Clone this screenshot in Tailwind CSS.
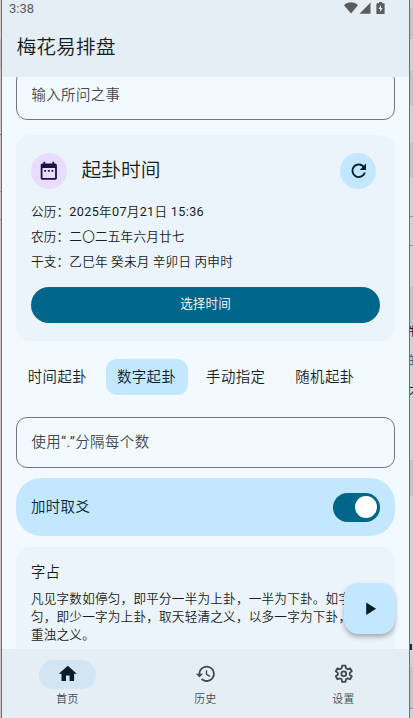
<!DOCTYPE html>
<html lang="zh-CN">
<head>
    <meta charset="UTF-8">
    <meta name="viewport" content="width=device-width, initial-scale=1.0">
    <title>梅花易排盘</title>
    <script src="https://cdn.jsdelivr.net/npm/@tailwindcss/browser@4"></script>
</head>
<body class="h-screen overflow-hidden flex bg-[#c9c8ca] text-[#171c20] font-[350] font-['Roboto','Noto_Sans_CJK_SC',sans-serif]">

<!-- Left window edge -->
<div class="w-0.5 shrink-0 bg-[#cdc5c7] border-r border-[#6d7173] flex flex-col">
    <div class="h-[39px] bg-[#d6d0d1]"></div>
    <div class="h-[31px] bg-[#c4bcbe]"></div>
    <div class="h-[65px] bg-[#d0c9cb] border-b border-[#777]"></div>
    <div class="h-[57px] bg-[#cdc5c7] border-b border-[#999]"></div>
    <div class="h-[28px] bg-[#cdc5c7] border-b border-[#999]"></div>
</div>

<div id="app" class="relative w-[407px] shrink-0 h-full flex flex-col bg-[#f3faff]">
    <!-- Top bar -->
    <header class="h-[77px] shrink-0 bg-[#e6eef5]">
        <div class="h-[17px] flex items-center pl-[7px] pr-[24px]">
            <span class="text-[13px] leading-[17px] font-normal text-[#5a5d60]">3:38</span>
            <svg class="ml-auto -mt-[2px] w-[14px] h-[12px] fill-[#5a5d60]" viewBox="0 0 14 12">
                <path d="M0 3.2C4-.6 10-.6 14 3.2L7 11.6z"/>
            </svg>
            <svg class="ml-[1px] -mt-px w-[12px] h-[12px] fill-[#5a5d60]" viewBox="0 0 12 12">
                <path d="M11.5.5v11.3H.5z"/>
            </svg>
            <svg class="ml-[5px] -mt-[2px] w-[9px] h-[12px] fill-[#5a5d60]" viewBox="0 0 9 12">
                <path d="M3 0h3v1.2h2a.6.6 0 0 1 .6.6v9.6a.6.6 0 0 1-.6.6H1a.6.6 0 0 1-.6-.6V1.8A.6.6 0 0 1 1 1.2h2z"/>
                <path class="fill-[#e6eef5]" d="M5 3 2.5 7h1.6v3L6.6 6H5z"/>
            </svg>
        </div>
        <h1 class="pl-[14.5px] pt-[18px] text-[19.8px] leading-[26px]">梅花易排盘</h1>
    </header>

    <!-- Content -->
    <main class="flex-1 min-h-0 overflow-hidden px-[14.4px]">
        <div class="-mt-2 h-[51px] flex items-center rounded-[11px] border border-[#70787f] pl-3.5 pt-0.5 text-[14.4px] tracking-[0.45px] text-[#40484d]">
            输入所问之事
        </div>

        <!-- Time card -->
        <section class="mt-[15px] h-[206px] rounded-[14px] bg-[#ecf4fb] px-[14.5px] pt-[18px]">
            <div class="flex items-center">
                <div class="size-9 rounded-full bg-[#e8ddff] flex items-center justify-center">
                    <svg class="size-[21.6px] fill-[#1f1048]" viewBox="0 0 24 24">
                        <path d="M9 11H7v2h2zm4 0h-2v2h2zm4 0h-2v2h2zm2-7h-1V2h-2v2H8V2H6v2H5c-1.11 0-1.99.9-1.99 2L3 20c0 1.1.89 2 2 2h14c1.1 0 2-.9 2-2V6c0-1.1-.9-2-2-2m0 16H5V9h14z"/>
                    </svg>
                </div>
                <h2 class="ml-[14.5px] text-[19.8px] leading-9">起卦时间</h2>
                <button class="ml-auto mr-[3.8px] size-9 rounded-full bg-[#c3e7ff] flex items-center justify-center">
                    <svg class="size-[21.6px] fill-[#001e2c]" viewBox="0 0 24 24">
                        <path d="M17.65 6.35C16.2 4.9 14.21 4 12 4c-4.42 0-7.99 3.58-7.99 8s3.57 8 7.99 8c3.73 0 6.84-2.55 7.73-6h-2.08c-.82 2.33-3.04 4-5.65 4-3.31 0-6-2.69-6-6s2.69-6 6-6c1.66 0 3.14.69 4.22 1.78L13 11h7V4z"/>
                    </svg>
                </button>
            </div>
            <div class="mt-[10px] text-[12.6px] leading-[25.2px] tracking-[0.22px]">
                <p>公历：<span class="font-normal tracking-[0.36px]">2025</span>年<span class="font-normal tracking-[0.36px]">07</span>月<span class="font-normal tracking-[0.36px]">21</span>日<span class="font-normal tracking-[0.36px]"> 15:36</span></p>
                <p>农历：二〇二五年六月廿七</p>
                <p>干支：乙巳年 癸未月 辛卯日 丙申时</p>
            </div>
            <button class="mt-3 w-full h-9 rounded-full bg-[#00668b] text-white text-[12.6px] tracking-[0.09px]">选择时间</button>
        </section>

        <!-- Method tabs -->
        <div class="mt-[18px] flex gap-[7.2px] text-[14.4px] tracking-[0.45px]">
            <div class="w-[82px] h-9 pt-0.5 flex items-center justify-center">时间起卦</div>
            <div class="w-[82px] h-9 pt-0.5 flex items-center justify-center rounded-[11px] bg-[#c3e7ff] text-[#001e2c]">数字起卦</div>
            <div class="w-[82px] h-9 pt-0.5 flex items-center justify-center">手动指定</div>
            <div class="w-[82px] h-9 pt-0.5 flex items-center justify-center">随机起卦</div>
        </div>

        <div class="mt-[22px] h-[51px] flex items-center rounded-[11px] border border-[#70787f] pl-3.5 text-[14.4px] tracking-[0.45px] text-[#40484d]">
            使用<span class="font-normal">“.”</span>分隔每个数
        </div>

        <!-- Switch row -->
        <div class="mt-[10px] h-[58px] flex items-center justify-between rounded-[25px] bg-[#c3e7ff] px-[14.5px] text-[#001e2c]">
            <span class="pt-0.5 text-[14.4px] tracking-[0.45px]">加时取爻</span>
            <div class="w-[47px] h-[29px] rounded-full bg-[#00668b] flex items-center justify-end pr-[3.6px]">
                <div class="size-[22px] rounded-full bg-white"></div>
            </div>
        </div>

        <section class="mt-[11px] h-[130px] rounded-[14px] bg-[#ecf4fb] px-[14.5px] pt-[15px]">
            <h3 class="text-[14.4px] leading-[22px] tracking-[0.15px]">字占</h3>
            <p class="mt-[6px] whitespace-nowrap text-[12.6px] leading-[18px] tracking-[0.22px]">
                凡见字数如停匀，即平分一半为上卦，一半为下卦。如字数不<br>
                匀，即少一字为上卦，取天轻清之义，以多一字为下卦，取地<br>
                重浊之义。
            </p>
        </section>
    </main>

    <!-- Start button -->
    <button class="absolute right-[14.4px] top-[583.3px] size-[50.4px] rounded-[14.4px] bg-[#c3e7ff] shadow-[0_3px_5px_rgba(0,0,0,0.3)] flex items-center justify-center">
        <svg class="size-[21.6px] fill-[#001e2c]" viewBox="0 0 24 24">
            <path d="M8 5v14l11-7z"/>
        </svg>
    </button>

    <!-- Bottom navigation -->
    <nav class="h-[69px] shrink-0 grid grid-cols-3 gap-[7px] bg-[#e6eef5] pt-[10.5px] text-[10.8px] tracking-[0.4px] text-[#40484d]">
        <a class="flex flex-col items-center">
            <span class="w-[57.6px] h-[29px] rounded-full bg-[#d1e5f4] flex items-center justify-center">
                <svg class="size-[21.6px] fill-[#0a1e28]" viewBox="0 0 24 24">
                    <path d="M10 20v-6h4v6h5v-8h3L12 3 2 12h3v8z"/>
                </svg>
            </span>
            <span class="mt-[4px] leading-[14.4px]">首页</span>
        </a>
        <a class="flex flex-col items-center">
            <span class="w-[57.6px] h-[29px] flex items-center justify-center">
                <svg class="size-[21.6px] fill-[#40484d]" viewBox="0 0 24 24">
                    <path d="M13 3c-4.97 0-9 4.03-9 9H1l3.89 3.89.07.14L9 12H6c0-3.87 3.13-7 7-7s7 3.13 7 7-3.13 7-7 7c-1.93 0-3.68-.79-4.94-2.06l-1.42 1.42C8.27 19.99 10.51 21 13 21c4.97 0 9-4.03 9-9s-4.03-9-9-9m-1 5v5l4.25 2.52.77-1.28-3.52-2.09V8z"/>
                </svg>
            </span>
            <span class="mt-[4px] leading-[14.4px]">历史</span>
        </a>
        <a class="flex flex-col items-center">
            <span class="w-[57.6px] h-[29px] flex items-center justify-center">
                <svg class="size-[21.6px] fill-none stroke-[#40484d] stroke-2" viewBox="0 0 24 24" stroke-linejoin="round">
                    <path d="M10.1 3h3.8l.5 2.9 1.9 1.1 2.7-1.1 1.9 3.3L18.6 11v2l2.3 1.8-1.9 3.3-2.7-1.1-1.9 1.1-.5 2.9h-3.8l-.5-2.9L7.7 17 5 18.100l-1.9-3.300L5.400 13v-2L3.100 9.200 5 5.900 7.700 7l1.900-1.100z"/>
                    <circle cx="12" cy="12" r="2.7"/>
                </svg>
            </span>
            <span class="mt-[4px] leading-[14.4px]">设置</span>
        </a>
    </nav>
</div>

<!-- Right window edge, with the page behind it showing through -->
<div class="flex-1 border-l border-[#6d7173] overflow-hidden flex flex-col font-normal">
    <div class="h-[8px] bg-[#d2d2d2]"></div>
    <div class="h-[31px] bg-[#c4c4c4]"></div>
    <div class="h-[31px] bg-[#d2d2d2]"></div>
    <div class="h-[36px] bg-[#c4c4c4]"></div>
    <div class="h-[36px] bg-[#d2d2d2]"></div>
    <div class="h-[36px] bg-[#c4c4c4]"></div>
    <div class="h-[39px] bg-[#d2d2d2] border-b border-[#999]"></div>
    <div class="h-[29px] bg-[#d2d2d2] border-b border-[#999]"></div>
    <div class="h-[40px] bg-[#d2d2d2]"></div>
    <div class="h-[38px] bg-[#c4c4c4]"></div>
    <div class="h-[136px] overflow-hidden bg-[#d2d2d2] text-[12px] leading-[29px]">
        <p class="-ml-[5px] -mt-[6px] w-5 text-[#3c0a46]">件</p>
        <p class="-ml-[2px] w-5 text-[#1c4f8a]">的</p>
        <p class="-ml-px w-5 text-[#101850]">大</p>
    </div>
    <div class="h-[36px] bg-[#c4c4c4]"></div>
    <div class="h-[130px] bg-[#d2d2d2]"></div>
    <div class="h-[41px] bg-[#d2d2d2] pt-[18px]"><div class="w-0.5 h-[6px] bg-[#1c2a3c]"></div></div>
    <div class="h-[42px] bg-[#c4c4c4] border-b border-[#999]"></div>
    <div class="flex-1 bg-[#d2d2d2]"></div>
</div>

</body>
</html>
